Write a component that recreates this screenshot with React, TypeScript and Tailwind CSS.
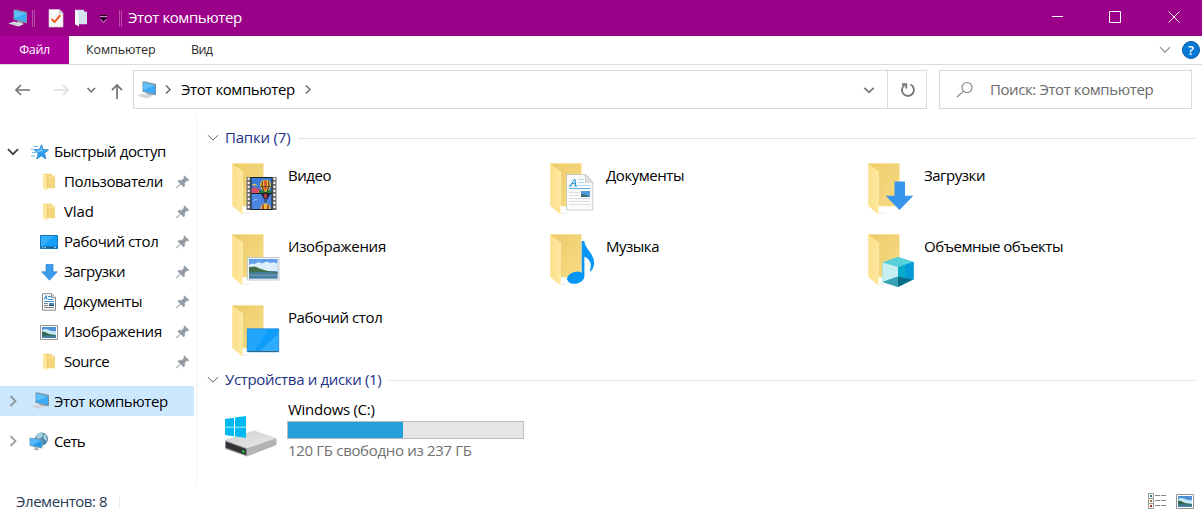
import React from "react";

type IconProps = { className?: string };

function Chevron({ d = "down", className = "" }: { d?: "down" | "right"; className?: string }) {
  return d === "down" ? (
    <svg className={className} width="12" height="8" viewBox="0 0 12 8" fill="none" stroke="currentColor">
      <path d="M1 1.2 6 6.2 11 1.2" />
    </svg>
  ) : (
    <svg className={className} width="8" height="12" viewBox="0 0 8 12" fill="none" stroke="currentColor">
      <path d="M1.500 1 6.500 6 1.500 11" />
    </svg>
  );
}

function PcIcon({ className = "" }: IconProps) {
  return (
    <svg className={className} width="20" height="18" viewBox="0 0 20 18">
      <path d="M5.500.8 7 .3 19 3v11l-1.200.3L5.500 10.800Z" fill="#7d929f" />
      <path d="M6.300 1.500 18 4.200V13L6.300 10Z" fill="#3aabf4" />
      <path d="M6.300 1.500 18 4.200 6.300 9Z" fill="#62c0f8" />
      <path d="M10 11.800 14 13l1.500 1.500-2.500.5-4-1.200Z" fill="#a3b0b8" />
      <path d="M.3 14.500 6 12.500l10 2.500-5.500 2.500Z" fill="#d9e0e5" />
      <path d="m2.500 14.600 7 1.900M4.500 13.800l7 1.900" stroke="#b9c3ca" strokeWidth=".5" fill="none" />
    </svg>
  );
}

function SmallFolder({ pale = false }: { pale?: boolean }) {
  return (
    <svg width="14" height="18" viewBox="0 0 14 18">
      <path d="M1 .8h9v2h3v12.500H1Z" fill={pale ? "#d3e2ee" : "#f4d57c"} />
      <path d="M5 2.800h8v2H5Z" fill={pale ? "#dde9f2" : "#f8df92"} />
      <path d="M1 .8 5 2.800v14.700L1 15.300Z" fill={pale ? "#f2f7fb" : "#ffe79d"} />
      <path d="M5.200 3v12" stroke={pale ? "#b9cddd" : "#e3bd5d"} strokeWidth=".5" />
    </svg>
  );
}

function StarIcon() {
  return (
    <svg width="18" height="16" viewBox="0 0 18 16">
      <path d="m10.500.8 1.700 4.700 5.300.3-4.100 3.400 1.500 5.600-4.600-3-4.600 3.200 1.500-5.600L3 5.800l5.500-.4Z" fill="#2d9df0" stroke="#1479c5" strokeWidth=".7" />
      <path d="m10.500 2.200 1 4 4 .1-8.700 2.300-2.600-2.300h4.700Z" fill="#6ac2fa" />
      <path d="M2.500 2.500H7M0 5.200h3M1 8.400h4M0 12h4" stroke="#69b9ed" />
    </svg>
  );
}

function DesktopIcon() {
  return (
    <svg width="18" height="14" viewBox="0 0 18 14">
      <path d="M.5.5h17v13H.5Z" fill="#13a0fb" stroke="#1675b5" />
      <path d="M1 1h13L3 11H1Z" fill="#35b0ff" />
      <path d="M1 11.500h16V13H1Z" fill="#135f91" />
      <path d="M2 12.300h1.500m1 0H6m8 0h2" stroke="#b5dcf6" />
    </svg>
  );
}

function ArrowIcon() {
  return (
    <svg width="17" height="17" viewBox="0 0 17 17">
      <path d="M5 .5h7v7.300h4.300L8.500 16.200.7 7.800H5Z" fill="#3a9aec" stroke="#2c83d1" strokeWidth=".7" />
    </svg>
  );
}

function DocIcon() {
  return (
    <svg width="16" height="18" viewBox="0 0 16 18">
      <path d="M1.500.7h9l4 4v12.500h-13Z" fill="#fff" stroke="#858b90" />
      <path d="M10.500.7v4h4" fill="#e1e4e6" stroke="#858b90" />
      <path d="m3 6.500 2-4 1 4M4 5h2" stroke="#1c82cc" strokeWidth=".9" fill="none" />
      <path d="M7 3.500h3m-3 3h5.500M3 8.500h10" stroke="#3191d2" />
      <path d="M3 10.600h4m-4 2h4m-4 2h10" stroke="#747b80" />
      <path d="M8 10h5v3H8Z" fill="#438ab3" />
      <path d="M8 12h5v1H8Z" fill="#344e55" />
    </svg>
  );
}

function PictureIcon() {
  return (
    <svg width="18" height="15" viewBox="0 0 18 15">
      <path d="M.5.5h17v14H.5Z" fill="#fff" stroke="#909397" />
      <path d="M2 2h14v11H2Z" fill="#4e91d9" />
      <path d="M2 5.500Q5 3 9 5t7 1v4H2Z" fill="#c9e8f7" />
      <path d="m2 6.500 3 .5 4 2 7 1v1.500H2Z" fill="#356650" />
      <path d="M2 10.500h14V13H2Z" fill="#447d9f" />
    </svg>
  );
}

function NetworkIcon() {
  return (
    <svg width="20" height="19" viewBox="0 0 20 19">
      <circle cx="12.500" cy="7" r="6.500" fill="#4b87a7" />
      <path d="M7 4q2-4 6-3l1 2-2 3-4 1Zm8-2q4 3 3 7l-2-1-2-3Z" fill="#a8cfdf" />
      <path d="m1 6 12 2v8L1 13.500Z" fill="#2399ec" stroke="#76a2bd" />
      <path d="m1.500 6.500 11 2-9 5-2-.5Z" fill="#51b9fa" />
      <path d="m5 14.500 4 1v1.200l2 .8-4 1-3-1.500 2-.5Z" fill="#a6b2ba" />
    </svg>
  );
}

function Pin() {
  return (
    <svg width="14" height="14" viewBox="0 0 14 14">
      <path d="M8.400.8 13 5.300l-1.200.6-.9-.3-2.400 2.500.2 2.900-1.100 1-3-3L1 12.800l-.6.2.1-.7L4.300 8.900 1.800 6.200l1.100-1 2.700.2 2.700-2.300-.5-1.100Z" fill="#929ba3" stroke="#929ba3" strokeWidth=".5" />
    </svg>
  );
}

type FolderKind = "video" | "docs" | "down" | "image" | "music" | "cube" | "desktop";

function Balloon({ y }: { y: number }) {
  return (
    <g transform={`translate(30 ${y})`}>
      <path d="M0 5Q0 0 5.500 0T11 5q0 3-4 6.500H4Q0 8 0 5Z" fill="#f0bd35" />
      <path d="M2.500 1.500Q.5 6 4 11M8.500 1.500Q10.500 6 7 11" stroke="#2c2433" strokeWidth="1" fill="none" />
      <path d="M4.300.5h2.400v9H4.300Z" fill="#d4472f" />
      <path d="M.5 6.500h10" stroke="#57351f" strokeWidth=".8" />
      <path d="M4.300 12h2.400v2H4.300Z" fill="#3b2a1d" />
    </g>
  );
}

function Overlay({ kind }: { kind: FolderKind }) {
  switch (kind) {
    case "video":
      return (
        <g>
          <path d="M16.500 15h30v33h-30Z" fill="#6b6c6e" />
          <path d="M18.700 15.700v32M44.400 15.700v32" stroke="#f6f6f6" strokeWidth="2" strokeDasharray="2.300 1.700" />
          <path d="M20.500 15h22v33h-22Z" fill="#1d2127" />
          <path d="M21.500 16h20v15h-20Z" fill="#3d7bd8" />
          <path d="M21.500 32h20v15h-20Z" fill="#4a86e2" />
          <path d="M21.500 27q3-3 5-1l4 2v3h-9Z" fill="#d84e68" />
          <path d="M22 22.500q2-1.500 4 0l2 1h-5Z" fill="#f0c04e" />
          <path d="M29 28.500h12.500V31H29Z" fill="#1f7a3a" />
          <Balloon y={18} />
          <path d="M31 32h9.500l-3.300 5.500h-3Z" fill="#302240" />
          <path d="M34.300 32h2.400v4h-2.400Z" fill="#c8483c" />
          <path d="M34.500 38.500h2V40h-2Z" fill="#2d2119" />
          <path d="M30.500 47q0-5.500 5-5.500t5 5.500Z" fill="#eebb3a" />
          <path d="M33 47v-4.500m5 4.500v-4.500" stroke="#8b302b" strokeWidth="1.400" />
          <path d="m23 39 3-2 2 1" stroke="#94b5ee" fill="none" />
        </g>
      );
    case "docs":
      return (
        <g>
          <path d="M18.500 12.500h19l7.200 7.700V48H18.500Z" fill="#fafafa" stroke="#bfc3c6" strokeWidth=".8" />
          <path d="M37.500 12.500v7.700h7.200Z" fill="#dfe3e5" stroke="#b4b9bc" strokeWidth=".6" />
          <path d="m22 24 4.800-7 1 7m-4-2.300h4M21.300 24h2.500m2.500 0h3" stroke="#168ac7" strokeWidth="1" fill="none" />
          <path d="M30 17.500h6m-6 3h6m-6 3h12" stroke="#b8dcef" />
          <path d="M21 26.500h21.500" stroke="#5fb2df" />
          <path d="M21 30.500h10.500M21 33.500h10.500M21 36.500h21M21 39.500h21M21 42.500h21" stroke="#dcdfe1" />
          <path d="M33 29h9v6h-9Z" fill="#4e9cda" />
          <path d="m33 32 4 .5 5 2.500h-9Z" fill="#396b72" />
        </g>
      );
    case "down":
      return <path d="M28.500 19.500H39V33.700h8.300L33.500 48 19.700 33.700h8.800Z" fill="#3695ec" />;
    case "image":
      return (
        <g>
          <path d="M17.500 24.500h31.500v22.500h-31.500Z" fill="#f4f6f7" stroke="#c7cbce" />
          <path d="M19 26h28.500v19.500H19Z" fill="#649fec" />
          <path d="M19 32q3-2.500 6-1 3-3 7-.5 5-3 8-.5 4-1 7.500.5V38H19Z" fill="#dbeefa" />
          <path d="m19 34 6-.5q7 3.500 13 4.500l9.500 1v2H19Z" fill="#426f4b" />
          <path d="M19 39.500q13-1 28.500.5v5.500H19Z" fill="#487fa1" />
          <path d="M19 42q15 1 28.500 0" stroke="#9bbac8" strokeWidth=".6" fill="none" />
        </g>
      );
    case "music":
      return (
        <g fill="#0796f5">
          <path d="M33.700 8h2.500q.8 5 5.300 10.500 5.500 7 4.500 13.500-.6 4-3.500 6.500l-.8-.6Q45.500 28 36.400 23.500V43.500h-2.700Z" />
          <ellipse cx="27.700" cy="44.700" rx="8.800" ry="5.900" transform="rotate(-14 27.700 44.700)" />
        </g>
      );
    case "cube":
      return (
        <g transform="translate(1.500 1)">
          <path d="m15 28.500 15.500-5.500L46 28v17L30.500 53 15 48Z" fill="#51c8d8" />
          <path d="m15 28.500 15.500-5.500L46 28l-15.500 5Z" fill="#58cfdd" />
          <path d="m15 28.500 15.500 4.500v9.500L15 48Z" fill="#c4eff0" />
          <path d="M30.500 33 46 28v17.500l-15.500-3Z" fill="#08aacb" />
          <path d="M38 30.600 46 28v17.500l-8-1.500Z" fill="#0798d9" />
          <path d="m15 48 15.500-5.500V53Z" fill="#38a4b1" />
          <path d="M30.500 42.500 46 45.500 30.500 53Z" fill="#066f87" />
        </g>
      );
    case "desktop":
      return (
        <g transform="translate(0 .5)">
          <path d="M17.300 24.300h31.400v23H17.300Z" fill="#109dfc" stroke="#127dcc" strokeWidth=".7" />
          <path d="M17.700 24.800h21L24 46.500h-6.300Z" fill="#23a5fd" />
          <path d="M48.500 29v17.500H30Z" fill="#2fabff" />
          <path d="M17.500 47h31" stroke="#35627f" />
        </g>
      );
  }
}

function BigFolder({ kind }: { kind: FolderKind }) {
  return (
    <svg width="52" height="56" viewBox="0 0 52 56" className="shrink-0">
      <defs>
        <linearGradient id={"back-" + kind} x1="0" y1="0" x2="1" y2="1">
          <stop stopColor="#eccb69" />
          <stop offset="1" stopColor="#f7db86" />
        </linearGradient>
        <linearGradient id={"front-" + kind} x1="0" y1="0" x2="1" y2="0">
          <stop stopColor="#fbdf8b" />
          <stop offset="1" stopColor="#ffe9a1" />
        </linearGradient>
      </defs>
      <path d="m13 52 6-.500 3-1h-8Z" fill="#ededed" />
      <path d="M2.300 1.500h31.200v42.800H13Z" fill={"url(#back-" + kind + ")"} />
      <path d="M2.300 1.500h31.200" stroke="#f8e39c" />
      <path d="M2.300 1.800 13.600 10v28l-1 1v13.700L2.300 44Z" fill={"url(#front-" + kind + ")"} />
      <path d="M13.600 10v28l-1 1" stroke="#dfba57" strokeWidth=".4" fill="none" />
      <Overlay kind={kind} />
    </svg>
  );
}

function DriveIcon() {
  return (
    <svg width="54" height="42" viewBox="0 0 54 42">
      <defs>
        <linearGradient id="drive-top" x1="0" y1="0" x2="1" y2="1">
          <stop stopColor="#d0d0d2" />
          <stop offset="1" stopColor="#e8e8e9" />
        </linearGradient>
      </defs>
      <path d="m1 24 29-9.500L52.500 22 23 32Z" fill="url(#drive-top)" />
      <path d="m23 32 29.500-10v7L23 40.500Z" fill="#b4b4b7" />
      <path d="m1 24 22 8v8.500L1 33Z" fill="#a9aaac" />
      <path d="m1.800 25.500 20.500 7.400v6.300L1.800 31.800Z" fill="#313337" />
      <path d="M18 34.200 20.500 35v1.700L18 36Z" fill="#24ed36" />
      <path d="m1 3 9-1.300V10.700H1ZM11 1.500 22 0v10.700H11ZM1 11.500h9v8.700l-9-1.200Zm10 0h11V21.800L11 20.400Z" fill="#00b9f2" />
    </svg>
  );
}

const quick: { label: string; icon: React.ReactNode; cls: string }[] = [
  { label: "Пользователи", icon: <SmallFolder />, cls: "tracking-[-0.45px]" },
  { label: "Vlad", icon: <SmallFolder />, cls: "tracking-[-0.1px]" },
  { label: "Рабочий стол", icon: <DesktopIcon />, cls: "tracking-[-0.41px]" },
  { label: "Загрузки", icon: <ArrowIcon />, cls: "tracking-[-0.48px]" },
  { label: "Документы", icon: <DocIcon />, cls: "tracking-[-0.45px]" },
  { label: "Изображения", icon: <PictureIcon />, cls: "tracking-[-0.27px]" },
  { label: "Source", icon: <SmallFolder />, cls: "tracking-[-0.48px]" },
];

const folders: { label: string; kind: FolderKind; cls: string }[] = [
  { label: "Видео", kind: "video", cls: "tracking-[-0.45px]" },
  { label: "Документы", kind: "docs", cls: "tracking-[-0.45px]" },
  { label: "Загрузки", kind: "down", cls: "tracking-[-0.48px]" },
  { label: "Изображения", kind: "image", cls: "tracking-[-0.27px]" },
  { label: "Музыка", kind: "music", cls: "tracking-[-0.48px]" },
  { label: "Объемные объекты", kind: "cube", cls: "tracking-[-0.48px]" },
  { label: "Рабочий стол", kind: "desktop", cls: "tracking-[-0.41px]" },
];

function SectionHeader({ label, cls }: { label: string; cls: string }) {
  return (
    <div className="flex h-6 items-center pr-[7px] pl-[10px] text-[#1e3287]">
      <Chevron className="shrink-0 text-[#5c5c5c]" />
      <span className={"ml-[6px] shrink-0 pb-[2px] " + cls}>{label}</span>
      <div className="ml-2 h-px flex-1 bg-[#e2e2e2]" />
    </div>
  );
}

function TitleBar() {
  return (
    <header className="flex h-9 shrink-0 items-center bg-[#9b0088] pl-2 text-white">
      <PcIcon />
      <div className="ml-[4px] h-[17px] w-[3px] border-x border-[#b64da9]" />
      <svg className="ml-[13px]" width="16" height="19" viewBox="0 0 16 19">
        <path d="M1 .5h10.500l3.500 3.500v14H1Z" fill="#fafafa" stroke="#d5c6cf" strokeWidth=".7" />
        <path d="M11.500.5V4H15" fill="#ddd" stroke="#aaa" strokeWidth=".6" />
        <path d="m3.500 10 3 3L12.500 6" fill="none" stroke="#f26122" strokeWidth="2" />
      </svg>
      <div className="ml-[10px]"><SmallFolder pale /></div>
      <svg className="ml-[11px]" width="9" height="9" viewBox="0 0 9 9">
        <path d="M1 3.500h7L4.500 7Z" fill="#000" />
        <path d="M1 2.500h7M1.500 5.500 4.500 8.300 7.500 5.500" stroke="#d4a1cc" strokeWidth=".9" fill="none" />
        <path d="M1 1.500h7" stroke="#16000f" />
      </svg>
      <div className="ml-[11px] h-[17px] w-[3px] border-x border-[#b64da9]" />
      <span className="ml-[6px] pb-[2px] tracking-[-0.42px]">Этот компьютер</span>
      <svg className="ml-auto" width="150" height="16" viewBox="0 0 150 16" fill="none" stroke="#fff">
        <path d="M-1 6.500h12M57.500 1.500h11v11h-11ZM116.500 1.500l11 11m0-11-11 11" />
      </svg>
    </header>
  );
}

export default function App() {
  return (
    <div className="flex h-[516px] w-[1202px] flex-col overflow-hidden bg-white font-['Open_Sans','Noto_Sans',sans-serif] text-[15px] leading-5 whitespace-nowrap text-black">
      <TitleBar />
      <nav className="flex h-[29px] shrink-0 items-center border-b border-[#dadbdc] text-[12.500px] text-[#2b2b2b]">
        <div className="flex h-full w-[69px] items-center justify-center bg-[#ab009a] tracking-[-0.4px] text-white">Файл</div>
        <span className="ml-[17px] w-[70px] tracking-[-0.1px]">Компьютер</span>
        <span className="ml-[35px] tracking-[-0.6px]">Вид</span>
        <Chevron className="ml-auto text-[#8a8a8a] [&_path]:[stroke-width:1.200]" />
        <div className="mr-[2px] ml-[11px] flex size-[18px] items-center justify-center rounded-full border border-[#0b5da8] bg-[#0878d7] text-[13px] font-semibold text-white">?</div>
      </nav>

      <div className="flex h-[51px] shrink-0 items-start pt-[5px]">
        <svg className="mt-[10px] ml-[14px]" width="111" height="20" viewBox="0 0 111 20" fill="none" strokeWidth="1.700">
          <path d="M16 10H2m5-5-5 5 5 5" stroke="#727272" />
          <path d="M40 10h14m-5-5 5 5-5 5" stroke="#dedede" />
          <path d="m73.500 8 3.800 3.800L81.100 8" stroke="#777" />
          <path d="M103 19V5m-5 5.200L103 5l5 5.200" stroke="#727272" />
        </svg>
        <div className="ml-2 flex h-[39px] w-[794px] items-center border border-[#d9d9d9]">
          <PcIcon className="ml-[3px]" />
          <svg className="ml-[7px]" width="8" height="12" viewBox="0 0 8 12" fill="none" stroke="#6c6c6c" strokeWidth="1.500"><path d="m2 1.500 4 4-4 4" /></svg>
          <span className="ml-[9px] w-[114px] pb-[2px] tracking-[-0.42px]">Этот компьютер</span>
          <svg className="ml-[9px]" width="8" height="12" viewBox="0 0 8 12" fill="none" stroke="#6c6c6c" strokeWidth="1.500"><path d="m2 1.500 4 4-4 4" /></svg>
          <svg className="ml-auto" width="12" height="8" viewBox="0 0 12 8" fill="none" stroke="#777" strokeWidth="1.800"><path d="m1.300 1.800 4.700 4.500 4.700-4.500" /></svg>
          <div className="ml-[12px] flex h-full w-[39px] items-center justify-center border-l border-[#d9d9d9]">
            <svg className="ml-[2px]" width="16" height="16" viewBox="0 0 16 16" fill="none" stroke="#777" strokeWidth="1.900">
              <path d="M4.500 3A6 6 0 1 0 10.500 2.500M2 2.200h4.200v4.300" />
            </svg>
          </div>
        </div>
        <div className="ml-3 flex h-[39px] w-[253px] items-center border border-[#d9d9d9] text-[#6b6b6b]">
          <svg className="ml-[16px]" width="18" height="18" viewBox="0 0 18 18" fill="none" stroke="#838383" strokeWidth="1.100">
            <circle cx="11" cy="6.500" r="5" />
            <path d="M7.500 10.200 1 16" />
          </svg>
          <span className="ml-[16px] pb-[2px] tracking-[-0.41px]">Поиск: Этот компьютер</span>
        </div>
      </div>

      <div className="flex h-[371px] shrink-0">
        <aside className="w-[197px] shrink-0 border-r border-[#f2f2f2] pt-[21px]">
          <div className="flex h-[30px] items-center pl-[7px]">
            <Chevron className="text-[#404040] [&_path]:[stroke-width:1.800]" />
            <div className="ml-[11px] flex w-5 justify-center"><StarIcon /></div>
            <span className="ml-1 pb-[2px] tracking-[-0.42px]">Быстрый доступ</span>
          </div>
          {quick.map((q) => (
            <div key={q.label} className="flex h-[30px] items-center pr-[6px] pl-[38px]">
              <div className="flex w-[22px] justify-center">{q.icon}</div>
              <span className={"ml-1 flex-1 pb-[2px] " + q.cls}>{q.label}</span>
              <Pin />
            </div>
          ))}
          <div className="mt-[9px] flex h-[30px] w-[194px] items-center bg-[#cce8ff] pl-[9px]">
            <Chevron d="right" className="text-[#8c969d] [&_path]:[stroke-width:1.800]" />
            <PcIcon className="ml-[13px]" />
            <span className="ml-1 tracking-[-0.42px]">Этот компьютер</span>
          </div>
          <div className="mt-[10px] flex h-[30px] items-center pl-[9px]">
            <Chevron d="right" className="text-[#a0a0a0] [&_path]:[stroke-width:1.800]" />
            <div className="ml-[12px]"><NetworkIcon /></div>
            <span className="ml-[5px] tracking-[-0.7px]">Сеть</span>
          </div>
        </aside>

        <main className="flex-1 pt-[10px]">
          <SectionHeader label="Папки (7)" cls="tracking-[-0.2px]" />
          <div className="mt-3 grid grid-cols-[318px_318px_318px] auto-rows-[71px] pl-[33px]">
            {folders.map((f) => (
              <div key={f.label} className="flex">
                <BigFolder kind={f.kind} />
                <span className={"mt-[3px] ml-[6px] " + f.cls}>{f.label}</span>
              </div>
            ))}
          </div>
          <div className="-mt-[7px]"><SectionHeader label="Устройства и диски (1)" cls="tracking-[-0.33px]" /></div>
          <div className="mt-[7px] flex pl-[27px]">
            <div className="mt-[17px]"><DriveIcon /></div>
            <div className="ml-[9px]">
              <div className="pl-px tracking-[-0.28px]">Windows (C:)</div>
              <div className="mt-[2px] h-[18px] w-[237px] border border-[#bcbcbc] bg-[#e6e6e6]">
                <div className="h-full w-[115px] bg-[#26a0da]" />
              </div>
              <div className="mt-px pl-px tracking-[-0.32px] text-[#707070]">120 ГБ свободно из 237 ГБ</div>
            </div>
          </div>
        </main>
      </div>

      <footer className="flex h-[29px] shrink-0 items-center pl-4 text-[#273a55]">
        <span className="w-[91px] pb-[2px] tracking-[-0.45px]">Элементов: 8</span>
        <div className="ml-[12px] h-3 w-px bg-[#ededed]" />
        <svg className="ml-auto" width="19" height="17" viewBox="0 0 19 17">
          {[0, 5, 10].map((y, i) => (
            <g key={y}>
              <path d={`M.5 ${y}.5h5v5h-5Z`} fill="#fff" stroke="#989898" />
              <path d={`M2 ${y + 2}h2v2h-2Z`} fill={["#397a88", "#936c3c", "#b72b21"][i]} />
              <path d={`M7 ${y + 2}.5h5m1 0h5`} stroke="#868686" />
            </g>
          ))}
        </svg>
        <div className="mr-[8px] ml-[9px]"><PictureIcon /></div>
      </footer>
    </div>
  );
}
